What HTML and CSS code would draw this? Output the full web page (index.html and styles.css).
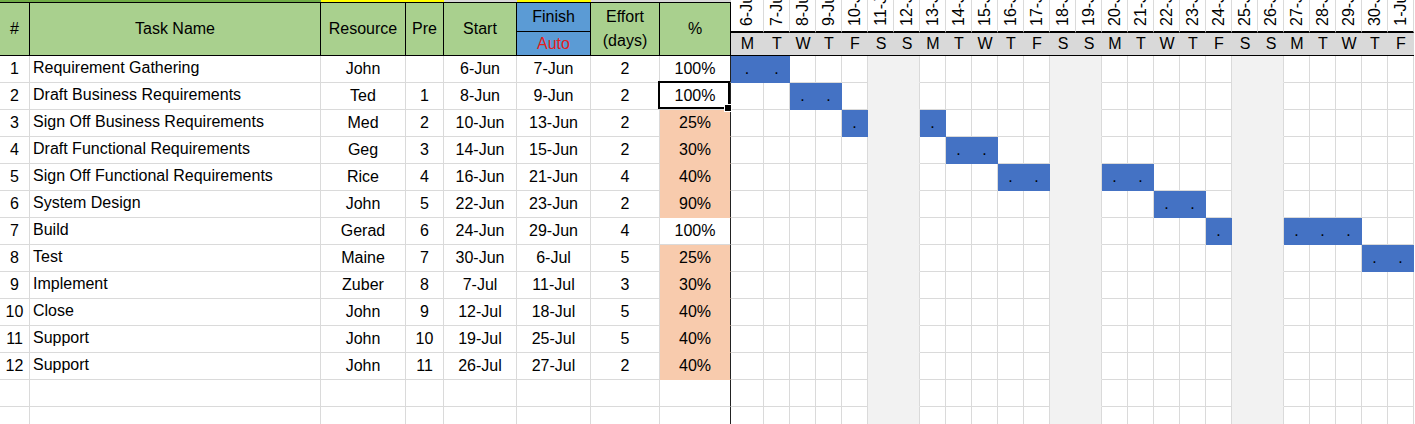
FILE: index.html
```html
<!DOCTYPE html>
<html>
<head>
<meta charset="utf-8">
<title>Project Gantt</title>
<link rel="stylesheet" href="styles.css">
</head>
<body>
<div class="sheet">
  <div class="left">
    <div class="strip"><i class="sg"></i><i class="sy"></i><i class="sx"></i><i class="sy"></i><i class="sx"></i></div>
    <div class="hrow cols">
      <div class="hc">#</div>
      <div class="hc">Task Name</div>
      <div class="hc">Resource</div>
      <div class="hc">Pre</div>
      <div class="hc">Start</div>
      <div class="fin"><div class="fin-top">Finish</div><div class="fin-bot">Auto</div></div>
      <div class="hc">Effort<br>(days)</div>
      <div class="hc">%</div>
    </div>
    <div class="row cols"><div>1</div><div>Requirement Gathering</div><div>John</div><div></div><div>6-Jun</div><div>7-Jun</div><div>2</div><div class="pct">100%</div></div>
    <div class="row cols"><div>2</div><div>Draft Business Requirements</div><div>Ted</div><div>1</div><div>8-Jun</div><div>9-Jun</div><div>2</div><div class="pct sel">100%</div></div>
    <div class="row cols"><div>3</div><div>Sign Off Business Requirements</div><div>Med</div><div>2</div><div>10-Jun</div><div>13-Jun</div><div>2</div><div class="pct o">25%</div></div>
    <div class="row cols"><div>4</div><div>Draft Functional Requirements</div><div>Geg</div><div>3</div><div>14-Jun</div><div>15-Jun</div><div>2</div><div class="pct o">30%</div></div>
    <div class="row cols"><div>5</div><div>Sign Off Functional Requirements</div><div>Rice</div><div>4</div><div>16-Jun</div><div>21-Jun</div><div>4</div><div class="pct o">40%</div></div>
    <div class="row cols"><div>6</div><div>System Design</div><div>John</div><div>5</div><div>22-Jun</div><div>23-Jun</div><div>2</div><div class="pct o">90%</div></div>
    <div class="row cols"><div>7</div><div>Build</div><div>Gerad</div><div>6</div><div>24-Jun</div><div>29-Jun</div><div>4</div><div class="pct">100%</div></div>
    <div class="row cols"><div>8</div><div>Test</div><div>Maine</div><div>7</div><div>30-Jun</div><div>6-Jul</div><div>5</div><div class="pct o">25%</div></div>
    <div class="row cols"><div>9</div><div>Implement</div><div>Zuber</div><div>8</div><div>7-Jul</div><div>11-Jul</div><div>3</div><div class="pct o">30%</div></div>
    <div class="row cols"><div>10</div><div>Close</div><div>John</div><div>9</div><div>12-Jul</div><div>18-Jul</div><div>5</div><div class="pct o">40%</div></div>
    <div class="row cols"><div>11</div><div>Support</div><div>John</div><div>10</div><div>19-Jul</div><div>25-Jul</div><div>5</div><div class="pct o">40%</div></div>
    <div class="row cols"><div>12</div><div>Support</div><div>John</div><div>11</div><div>26-Jul</div><div>27-Jul</div><div>2</div><div class="pct o">40%</div></div>
    <div class="row cols"><div></div><div></div><div></div><div></div><div></div><div></div><div></div><div class="pct"></div></div>
    <div class="row cols"><div></div><div></div><div></div><div></div><div></div><div></div><div></div><div class="pct"></div></div>
  </div>
  <div class="right">
    <div class="gcols dates">
      <div><span>6-Jun</span></div><div><span>7-Jun</span></div><div><span>8-Jun</span></div><div><span>9-Jun</span></div><div><span>10-Jun</span></div><div><span>11-Jun</span></div><div><span>12-Jun</span></div><div><span>13-Jun</span></div><div><span>14-Jun</span></div><div><span>15-Jun</span></div><div><span>16-Jun</span></div><div><span>17-Jun</span></div><div><span>18-Jun</span></div><div><span>19-Jun</span></div><div><span>20-Jun</span></div><div><span>21-Jun</span></div><div><span>22-Jun</span></div><div><span>23-Jun</span></div><div><span>24-Jun</span></div><div><span>25-Jun</span></div><div><span>26-Jun</span></div><div><span>27-Jun</span></div><div><span>28-Jun</span></div><div><span>29-Jun</span></div><div><span>30-Jun</span></div><div><span>1-Jul</span></div>
    </div>
    <div class="gcols days">
      <div>M</div><div>T</div><div>W</div><div>T</div><div>F</div><div>S</div><div>S</div><div>M</div><div>T</div><div>W</div><div>T</div><div>F</div><div>S</div><div>S</div><div>M</div><div>T</div><div>W</div><div>T</div><div>F</div><div>S</div><div>S</div><div>M</div><div>T</div><div>W</div><div>T</div><div>F</div>
    </div>
    <div class="gcols gr"><i class="b">.</i><i class="b">.</i><i></i><i></i><i></i><i></i><i></i><i></i><i></i><i></i><i></i><i></i><i></i><i></i><i></i><i></i><i></i><i></i><i></i><i></i><i></i><i></i><i></i><i></i><i></i><i></i></div>
    <div class="gcols gr"><i></i><i></i><i class="b">.</i><i class="b">.</i><i></i><i></i><i></i><i></i><i></i><i></i><i></i><i></i><i></i><i></i><i></i><i></i><i></i><i></i><i></i><i></i><i></i><i></i><i></i><i></i><i></i><i></i></div>
    <div class="gcols gr"><i></i><i></i><i></i><i></i><i class="b">.</i><i></i><i></i><i class="b">.</i><i></i><i></i><i></i><i></i><i></i><i></i><i></i><i></i><i></i><i></i><i></i><i></i><i></i><i></i><i></i><i></i><i></i><i></i></div>
    <div class="gcols gr"><i></i><i></i><i></i><i></i><i></i><i></i><i></i><i></i><i class="b">.</i><i class="b">.</i><i></i><i></i><i></i><i></i><i></i><i></i><i></i><i></i><i></i><i></i><i></i><i></i><i></i><i></i><i></i><i></i></div>
    <div class="gcols gr"><i></i><i></i><i></i><i></i><i></i><i></i><i></i><i></i><i></i><i></i><i class="b">.</i><i class="b">.</i><i></i><i></i><i class="b">.</i><i class="b">.</i><i></i><i></i><i></i><i></i><i></i><i></i><i></i><i></i><i></i><i></i></div>
    <div class="gcols gr"><i></i><i></i><i></i><i></i><i></i><i></i><i></i><i></i><i></i><i></i><i></i><i></i><i></i><i></i><i></i><i></i><i class="b">.</i><i class="b">.</i><i></i><i></i><i></i><i></i><i></i><i></i><i></i><i></i></div>
    <div class="gcols gr"><i></i><i></i><i></i><i></i><i></i><i></i><i></i><i></i><i></i><i></i><i></i><i></i><i></i><i></i><i></i><i></i><i></i><i></i><i class="b">.</i><i></i><i></i><i class="b">.</i><i class="b">.</i><i class="b">.</i><i></i><i></i></div>
    <div class="gcols gr"><i></i><i></i><i></i><i></i><i></i><i></i><i></i><i></i><i></i><i></i><i></i><i></i><i></i><i></i><i></i><i></i><i></i><i></i><i></i><i></i><i></i><i></i><i></i><i></i><i class="b">.</i><i class="b">.</i></div>
    <div class="gcols gr"><i></i><i></i><i></i><i></i><i></i><i></i><i></i><i></i><i></i><i></i><i></i><i></i><i></i><i></i><i></i><i></i><i></i><i></i><i></i><i></i><i></i><i></i><i></i><i></i><i></i><i></i></div>
    <div class="gcols gr"><i></i><i></i><i></i><i></i><i></i><i></i><i></i><i></i><i></i><i></i><i></i><i></i><i></i><i></i><i></i><i></i><i></i><i></i><i></i><i></i><i></i><i></i><i></i><i></i><i></i><i></i></div>
    <div class="gcols gr"><i></i><i></i><i></i><i></i><i></i><i></i><i></i><i></i><i></i><i></i><i></i><i></i><i></i><i></i><i></i><i></i><i></i><i></i><i></i><i></i><i></i><i></i><i></i><i></i><i></i><i></i></div>
    <div class="gcols gr"><i></i><i></i><i></i><i></i><i></i><i></i><i></i><i></i><i></i><i></i><i></i><i></i><i></i><i></i><i></i><i></i><i></i><i></i><i></i><i></i><i></i><i></i><i></i><i></i><i></i><i></i></div>
    <div class="gcols gr"><i></i><i></i><i></i><i></i><i></i><i></i><i></i><i></i><i></i><i></i><i></i><i></i><i></i><i></i><i></i><i></i><i></i><i></i><i></i><i></i><i></i><i></i><i></i><i></i><i></i><i></i></div>
    <div class="gcols gr"><i></i><i></i><i></i><i></i><i></i><i></i><i></i><i></i><i></i><i></i><i></i><i></i><i></i><i></i><i></i><i></i><i></i><i></i><i></i><i></i><i></i><i></i><i></i><i></i><i></i><i></i></div>
  </div>
</div>
</body>
</html>
```
FILE: styles.css
```css
* { box-sizing: border-box; }
html, body { margin: 0; padding: 0; overflow: hidden; background: #fff; }
body {
  font-family: "Liberation Sans", Arial, sans-serif;
  font-size: 16px;
  color: #000;
}
.sheet { display: flex; width: 1415px; height: 424px; overflow: hidden; }
.left { width: 731px; flex: none; }
.right { width: 683px; flex: none; }

/* top strip above header */
.strip { display: grid; grid-template-columns: 321px 123px 73px 74px 140px; height: 2px; }
.strip i { display: block; height: 2px; }
.sg { background: #70ad47; }
.sy { background: #ffff00; }
.sx { background: #d9d9d9; }

.cols { display: grid; grid-template-columns: 30px 291px 85px 38px 73px 74px 69px 71px; }

/* header */
.hrow { height: 54px; border-top: 1px solid #000; border-bottom: 1px solid #000; }
.hc {
  background: #a9d08e;
  border-right: 1px solid #000;
  display: flex; align-items: center; justify-content: center;
  text-align: center; line-height: 24px;
}
.fin { display: flex; flex-direction: column; background: #5b9bd5; border-right: 1px solid #000; }
.fin-top { height: 29px; border-bottom: 1px solid #000; display: flex; align-items: center; justify-content: center; }
.fin-bot { flex: 1; display: flex; align-items: center; justify-content: center; color: #e3201b; }

/* data rows */
.row { height: 27px; }
.row > div {
  border-right: 1px solid #dadada;
  border-bottom: 1px solid #dadada;
  line-height: 26px;
  text-align: center;
  white-space: nowrap;
  overflow: hidden;
}
.row > div:nth-child(2) { text-align: left; padding-left: 3px; line-height: 23px; }
.row > div.pct { border-right-color: #222; }
.row > div.o { background: #f8cbad; border-bottom-color: #f8cbad; }
.row > div.sel { position: relative; overflow: visible; }
.row > div.sel::after {
  content: ""; position: absolute;
  left: -2px; top: -2px; right: 0; bottom: 0;
  border: 2px solid #000;
}
.row > div.sel::before {
  content: ""; position: absolute; z-index: 2;
  right: -2px; bottom: -3px; width: 6px; height: 6px;
  background: #000; border: 1px solid #fff;
}

/* gantt */
.gcols { display: grid; grid-template-columns: 33px repeat(25, 26px); }
.dates > div {
  height: 33px;
  border-right: 1px solid #dadada;
  border-bottom: 2px solid #000;
  overflow: hidden;
  display: flex; align-items: flex-end; justify-content: center;
  padding-bottom: 5px;
}
.dates span {
  writing-mode: vertical-rl;
  transform: rotate(180deg);
  white-space: nowrap;
  line-height: 16px;
}
.days > div {
  height: 23px;
  background: #d9d9d9;
  border-bottom: 1px solid #000;
  line-height: 22px;
  text-align: center;
}
.gr { height: 27px; }
.gr i {
  display: block; font-style: normal;
  border-right: 1px solid #dadada;
  border-bottom: 1px solid #dadada;
  line-height: 26px;
  text-align: center;
}
.gr i:nth-child(6), .gr i:nth-child(13), .gr i:nth-child(20) {
  background: #f2f2f2; border-color: #f2f2f2;
}
.gr i:nth-child(7), .gr i:nth-child(14), .gr i:nth-child(21) {
  background: #f2f2f2; border-bottom-color: #f2f2f2;
}
.gr i.b { background: #4472c4; border-color: #4472c4; }
```
